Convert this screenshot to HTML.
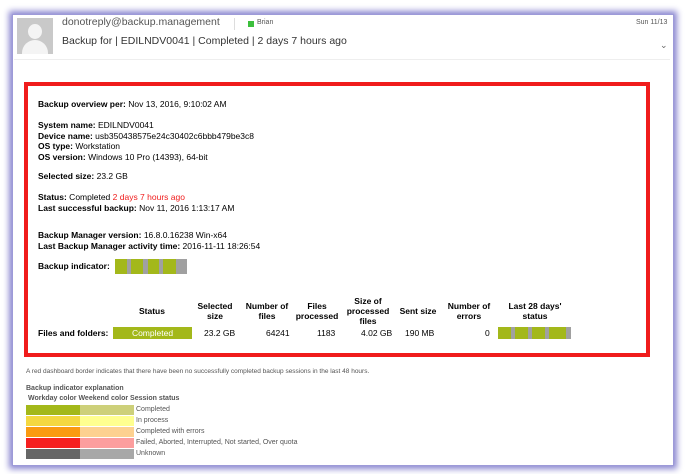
<!DOCTYPE html><html><head><style>
body{margin:0;width:685px;height:474px;background:#fff;position:relative;overflow:hidden;font-family:"Liberation Sans",sans-serif;color:#000}
.win{position:absolute;left:12px;top:14px;width:660px;height:450px;background:#fff;box-shadow:0 0 6px 3px #8a86d0;border:1px solid #9d9ad8}
.a{position:absolute;white-space:nowrap}
.t{font-size:8.5px;line-height:10.5px}
b{font-weight:bold}
.box{position:absolute;left:24px;top:82px;width:618px;height:267px;border:4px solid #f01c1c}
.g{background:#a3b81a}.gr{background:#a0a0a0}
.bar{position:absolute;display:flex;height:15px}
.h{font-size:8.5px;font-weight:bold;text-align:center;line-height:10px}
.s{font-size:7px;color:#555}
</style></head><body>
<div class="win"></div>
<div class="a" style="left:17px;top:18px;width:36px;height:36px;background:#c9c9c9;overflow:hidden"><div style="position:absolute;left:11px;top:6px;width:14px;height:15px;border-radius:50%;background:#f4f4f4"></div><div style="position:absolute;left:5px;top:22px;width:26px;height:20px;border-radius:13px 13px 0 0;background:#f4f4f4"></div></div>
<div class="a" style="left:62px;top:16px;font-size:10.5px;color:#555">donotreply@backup.management</div>
<div class="a" style="left:234px;top:18px;width:1px;height:12px;background:#ddd"></div>
<div class="a" style="left:248px;top:21px;width:6px;height:6px;background:#3cbf3c"></div>
<div class="a" style="left:257px;top:19px;font-size:7px;color:#555">Brian</div>
<div class="a" style="left:636px;top:19px;font-size:7px;color:#555">Sun 11/13</div>
<div class="a" style="left:62px;top:35px;font-size:10.5px;color:#333">Backup for | EDILNDV0041 | Completed | 2 days 7 hours ago</div>
<div class="a" style="left:660px;top:40px;font-size:9px;color:#666">&#8964;</div>
<div class="a" style="left:14px;top:59px;width:656px;height:1px;background:#eee"></div>
<div class="box"></div>
<div class="a t" style="left:38px;top:99px"><b>Backup overview per:</b> Nov 13, 2016, 9:10:02 AM</div>
<div class="a t" style="left:38px;top:120px"><b>System name:</b> EDILNDV0041<br><b>Device name:</b> usb350438575e24c30402c6bbb479be3c8<br><b>OS type:</b> Workstation<br><b>OS version:</b> Windows 10 Pro (14393), 64-bit</div>
<div class="a t" style="left:38px;top:171px"><b>Selected size:</b> 23.2 GB</div>
<div class="a t" style="left:38px;top:192px"><b>Status:</b> Completed <span style="color:#f01c1c">2 days 7 hours ago</span><br><b>Last successful backup:</b> Nov 11, 2016 1:13:17 AM</div>
<div class="a t" style="left:38px;top:230px"><b>Backup Manager version:</b> 16.8.0.16238 Win-x64<br><b>Last Backup Manager activity time:</b> 2016-11-11 18:26:54</div>
<div class="a t" style="left:38px;top:261px"><b>Backup indicator:</b></div>
<div class="bar" style="left:115px;top:259px;width:72px"><div class="g" style="width:12px"></div><div class="gr" style="width:4px"></div><div class="g" style="width:12px"></div><div class="gr" style="width:5px"></div><div class="g" style="width:11px"></div><div class="gr" style="width:4px"></div><div class="g" style="width:13px"></div><div class="gr" style="width:11px"></div></div>
<div class="a h" style="left:128px;top:306px;width:48px">Status</div>
<div class="a h" style="left:192px;top:301px;width:46px">Selected<br>size</div>
<div class="a h" style="left:240px;top:301px;width:54px">Number of<br>files</div>
<div class="a h" style="left:292px;top:301px;width:50px">Files<br>processed</div>
<div class="a h" style="left:343px;top:296px;width:50px">Size of<br>processed<br>files</div>
<div class="a h" style="left:394px;top:306px;width:48px">Sent size</div>
<div class="a h" style="left:442px;top:301px;width:54px">Number of<br>errors</div>
<div class="a h" style="left:496px;top:301px;width:78px">Last 28 days'<br>status</div>
<div class="a t" style="left:38px;top:328px"><b>Files and folders:</b></div>
<div class="a" style="left:113px;top:327px;width:79px;height:12px;background:#a3b81a;color:#fff;font-size:8.5px;text-align:center;line-height:12px">Completed</div>
<div class="a t" style="left:204px;top:328px">23.2 GB</div>
<div class="a t" style="left:266px;top:328px">64241</div>
<div class="a t" style="left:317px;top:328px">1183</div>
<div class="a t" style="left:361px;top:328px">4.02 GB</div>
<div class="a t" style="left:405px;top:328px">190 MB</div>
<div class="a t" style="left:485px;top:328px">0</div>
<div class="bar" style="left:498px;top:327px;width:73px;height:12px"><div class="g" style="width:13px"></div><div class="gr" style="width:4px"></div><div class="g" style="width:13px"></div><div class="gr" style="width:4px"></div><div class="g" style="width:13px"></div><div class="gr" style="width:4px"></div><div class="g" style="width:17px"></div><div class="gr" style="width:5px"></div></div>
<div class="a s" style="left:26px;top:368px;font-size:6.5px">A red dashboard border indicates that there have been no successfully completed backup sessions in the last 48 hours.</div>
<div class="a s" style="left:26px;top:385px;font-weight:bold">Backup indicator explanation</div>
<div class="a s" style="left:28px;top:395px;font-weight:bold">Workday color Weekend color Session status</div>
<div class="a" style="left:26px;top:405px;width:54px;height:10px;background:#a3b81a"></div><div class="a" style="left:80px;top:405px;width:54px;height:10px;background:#cdd07a"></div><div class="a s" style="left:136px;top:406px">Completed</div>
<div class="a" style="left:26px;top:416px;width:54px;height:10px;background:#f4d840"></div><div class="a" style="left:80px;top:416px;width:54px;height:10px;background:#ffff90"></div><div class="a s" style="left:136px;top:417px">In process</div>
<div class="a" style="left:26px;top:427px;width:54px;height:10px;background:#fa9a10"></div><div class="a" style="left:80px;top:427px;width:54px;height:10px;background:#fdd190"></div><div class="a s" style="left:136px;top:428px">Completed with errors</div>
<div class="a" style="left:26px;top:438px;width:54px;height:10px;background:#f52020"></div><div class="a" style="left:80px;top:438px;width:54px;height:10px;background:#fc9e9e"></div><div class="a s" style="left:136px;top:439px">Failed, Aborted, Interrupted, Not started, Over quota</div>
<div class="a" style="left:26px;top:449px;width:54px;height:10px;background:#666"></div><div class="a" style="left:80px;top:449px;width:54px;height:10px;background:#a8a8a8"></div><div class="a s" style="left:136px;top:450px">Unknown</div>
</body></html>
